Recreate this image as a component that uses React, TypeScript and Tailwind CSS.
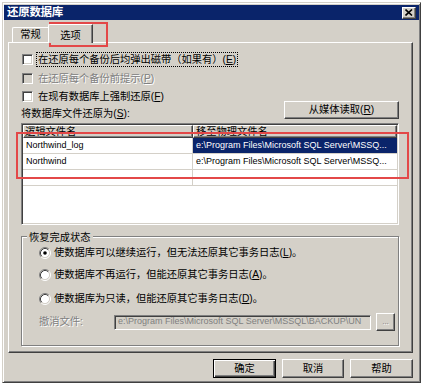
import React from 'react';

const raised =
  'border border-t-white border-l-white border-r-[#404040] border-b-[#404040] shadow-[inset_-1px_-1px_0_#808080]';
const sunken =
  'border border-t-[#808080] border-l-[#808080] border-r-white border-b-white shadow-[inset_1px_1px_0_#404040,inset_-1px_-1px_0_#d4d0c8]';
const dimText = 'text-[#808080] [text-shadow:1px_1px_0_#fff]';

const Key = ({ k }: { k: string }) => (
  <>
    (<span className="underline underline-offset-1">{k}</span>)
  </>
);

const Check = ({ children, disabled, focus }: { children: React.ReactNode; disabled?: boolean; focus?: boolean }) => (
  <div className="flex h-[14px] items-center gap-[4px] pl-[1px]">
    <span className={`h-[11px] w-[11px] shrink-0 ${sunken} ${disabled ? 'bg-[#d4d0c8]' : 'bg-white'}`} />
    <span
      className={`whitespace-nowrap leading-[13px] px-[1px] ${disabled ? dimText : 'text-black'} ${
        focus ? 'outline outline-1 outline-dotted outline-black' : ''
      }`}
    >
      {children}
    </span>
  </div>
);

const Radio = ({ children, checked }: { children: React.ReactNode; checked?: boolean }) => (
  <div className="flex h-[14px] items-center gap-[3px]">
    <svg width="12" height="12" viewBox="0 0 12 12" className="shrink-0">
      <circle cx="6" cy="6" r="4.5" fill="#fff" />
      <path d="M2.11 9.89 A5.5 5.5 0 0 1 9.89 2.11" fill="none" stroke="#808080" />
      <path d="M9.89 2.11 A5.5 5.5 0 0 1 2.11 9.89" fill="none" stroke="#fff" />
      <path d="M2.82 9.18 A4.5 4.5 0 0 1 9.18 2.82" fill="none" stroke="#404040" />
      <path d="M9.18 2.82 A4.5 4.5 0 0 1 2.82 9.18" fill="none" stroke="#d4d0c8" />
      {checked && <circle cx="6" cy="6" r="1.8" fill="#000" />}
    </svg>
    <span className="whitespace-nowrap text-black">{children}</span>
  </div>
);

const rows = [
  { logical: 'Northwind_log', physical: 'e:\\Program Files\\Microsoft SQL Server\\MSSQ...', selected: true },
  { logical: 'Northwind', physical: 'e:\\Program Files\\Microsoft SQL Server\\MSSQ...' },
  { logical: '', physical: '' },
];

export default function App() {
  return (
    <div className="relative h-[390px] w-[428px] overflow-hidden bg-white pl-[2px] pt-[2px] font-['Liberation_Sans','Noto_Sans_CJK_SC',sans-serif] text-[10.25px]">
      <div className="flex h-[381px] w-[419px] flex-col border border-t-[#d4d0c8] border-l-[#d4d0c8] border-r-[#404040] border-b-[#404040] bg-[#d4d0c8] p-[1px] shadow-[inset_1px_1px_0_#fff,inset_-1px_-1px_0_#808080]">
        {/* title bar */}
        <div className="mt-[1px] flex h-[15px] items-center justify-between bg-[#0a246a] pl-[3px] pr-[3px]">
          <span className="text-[11.5px] font-bold leading-none tracking-[-0.3px] text-white">还原数据库</span>
          <button className={`flex h-[12px] w-[14px] items-center justify-center bg-[#d4d0c8] ${raised}`}>
            <svg width="8" height="7" viewBox="0 0 8 7">
              <path d="M0.5 0.5 L7 6.5 M7 0.5 L0.5 6.5" stroke="#000" strokeWidth="1.6" />
            </svg>
          </button>
        </div>

        <div className="flex flex-1 flex-col pl-[4px] pr-[6px]">
          {/* tabs */}
          <div className="flex h-[22px] items-end pl-[4px]">
            <div className="flex h-[15px] w-[37px] items-center justify-center rounded-tl-[2px] border-l border-t border-l-white border-t-white border-r border-r-[#404040] text-black">
              常规
            </div>
            <div className="relative z-10 -mb-[1px] -ml-[1px] flex h-[19px] w-[45px] items-start justify-center rounded-tl-[2px] border-l border-t border-l-white border-t-white border-r border-r-[#404040] bg-[#d4d0c8] pt-[3px] text-black shadow-[inset_-1px_0_0_#808080]">
              选项
            </div>
          </div>

          {/* tab panel */}
          <div className="flex h-[311px] flex-col border border-t-white border-l-white border-r-[#404040] border-b-[#404040] pl-[12px] pr-[13px] pt-[9px] shadow-[inset_-1px_-1px_0_#808080]">
            <div className="flex items-end justify-between">
              <div className="flex flex-col">
                <Check focus>
                  在还原每个备份后均弹出磁带（如果有）<Key k="E" />
                </Check>
                <div className="mt-[5px]">
                  <Check disabled>
                    在还原每个备份前提示<Key k="P" />
                  </Check>
                </div>
                <div className="mt-[4px]">
                  <Check>
                    在现有数据库上强制还原<Key k="F" />
                  </Check>
                </div>
                <div className="mt-[4px] flex h-[14px] items-center text-black">
                  将数据库文件还原为<Key k="S" />:
                </div>
              </div>
              <button className={`mb-[2px] flex h-[18px] w-[115px] items-center justify-center bg-[#d4d0c8] text-black ${raised}`}>
                从媒体读取<Key k="R" />
              </button>
            </div>

            {/* file grid */}
            <div className={`mt-[2px] flex h-[102px] flex-col bg-white p-[1px] ${sunken}`}>
              <div className="flex h-[13px] text-black">
                <div className={`flex w-[170px] items-center pl-[1px] bg-[#d4d0c8] ${raised}`}>逻辑文件名</div>
                <div className={`flex flex-1 items-center pl-[2px] bg-[#d4d0c8] ${raised}`}>移至物理文件名</div>
              </div>
              {rows.map((r, i) => (
                <div key={i} className="flex h-[16px] border-b border-b-[#d4d0c8] text-[9px] leading-none">
                  <div className="flex w-[170px] items-center border-r border-r-[#d4d0c8] pl-[3px] text-black">{r.logical}</div>
                  <div
                    className={`flex flex-1 items-center overflow-hidden whitespace-nowrap pl-[3px] ${
                      r.selected ? 'bg-[#0a246a] text-white' : 'text-black'
                    }`}
                  >
                    {r.physical}
                  </div>
                </div>
              ))}
            </div>

            {/* recovery state group */}
            <div className="relative mt-[11px] flex h-[110px] flex-col border border-[#808080] pl-[17px] pt-[9px] shadow-[inset_1px_1px_0_#fff,1px_1px_0_#fff]">
              <span className="absolute -top-[7px] left-[5px] bg-[#d4d0c8] px-[2px] text-black">恢复完成状态</span>
              <Radio checked>
                使数据库可以继续运行，但无法还原其它事务日志<Key k="L" />。
              </Radio>
              <div className="mt-[8px]">
                <Radio>
                  使数据库不再运行，但能还原其它事务日志<Key k="A" />。
                </Radio>
              </div>
              <div className="mt-[10px]">
                <Radio>
                  使数据库为只读，但能还原其它事务日志<Key k="D" />。
                </Radio>
              </div>
              <div className="mt-[7px] flex h-[18px] items-center">
                <span className={`w-[75px] shrink-0 ${dimText}`}>撤消文件:</span>
                <div className={`flex h-[15px] w-[257px] items-center whitespace-nowrap bg-[#d4d0c8] pl-[3px] text-[9px] text-[#808080] ${sunken}`}>
                  e:\Program Files\Microsoft SQL Server\MSSQL\BACKUP\UN
                </div>
                <button className={`ml-[5px] flex h-[18px] w-[19px] items-end justify-center bg-[#d4d0c8] pb-[4px] text-[8px] leading-none ${dimText} ${raised}`}>
                  ...
                </button>
              </div>
            </div>
          </div>

          {/* dialog buttons */}
          <div className="mt-[6px] flex justify-end gap-[6px]">
            <button className="flex h-[19px] w-[63px] items-center justify-center border border-black bg-[#d4d0c8] text-black shadow-[inset_1px_1px_0_#fff,inset_-1px_-1px_0_#404040,inset_-2px_-2px_0_#808080]">
              确定
            </button>
            <button className={`flex h-[19px] w-[62px] items-center justify-center bg-[#d4d0c8] text-black ${raised}`}>取消</button>
            <button className={`flex h-[19px] w-[63px] items-center justify-center bg-[#d4d0c8] text-black ${raised}`}>帮助</button>
          </div>
        </div>
      </div>

      {/* red annotation boxes */}
      <div className="pointer-events-none absolute left-[49px] top-[22px] h-[25px] w-[59px] border-2 border-[#e34848]" />
      <div className="pointer-events-none absolute left-[16px] top-[132px] h-[47px] w-[393px] border-2 border-[#e34848]" />
    </div>
  );
}
